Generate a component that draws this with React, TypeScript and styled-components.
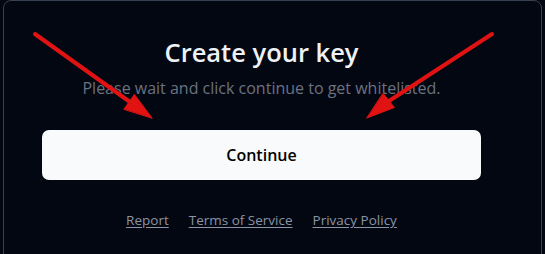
import styled, { createGlobalStyle } from "styled-components";

const GlobalStyle = createGlobalStyle`
  html, body {
    margin: 0;
    padding: 0;
    background: #030712;
    font-family: "Open Sans", "Noto Sans", sans-serif;
  }
`;

const Page = styled.div`
  position: relative;
  width: 545px;
  height: 254px;
  overflow: hidden;
  padding: 0 3px;
  box-sizing: border-box;
`;

const Card = styled.div`
  height: 280px;
  border: 1px solid #374151;
  border-radius: 8px;
  background: #030712;
  display: flex;
  flex-direction: column;
  align-items: center;
  padding: 33px 60px 0 38px;
  box-sizing: border-box;
`;

const Title = styled.h1`
  margin: 0;
  font-size: 25.5px;
  line-height: 36px;
  font-weight: 600;
  color: #eef2f7;
`;

const Subtitle = styled.p`
  margin: 7px 0 0;
  font-size: 16px;
  line-height: 22px;
  color: #6b7280;
`;

const ContinueButton = styled.button`
  margin-top: 31px;
  width: 100%;
  height: 50px;
  border: none;
  border-radius: 7px;
  background: #f8fafc;
  color: #000;
  font-family: inherit;
  font-size: 16px;
  font-weight: 600;
  cursor: pointer;
`;

const Links = styled.div`
  margin-top: 31px;
  display: flex;
  gap: 20px;
`;

const FooterLink = styled.a`
  font-size: 13.5px;
  color: #8b94a6;
  text-decoration: underline;
  text-underline-offset: 2px;
  cursor: pointer;
`;

const Arrows = styled.svg`
  position: absolute;
  left: 0;
  top: 0;
  pointer-events: none;
`;

const App = () => {
  return (
    <>
      <GlobalStyle />
      <Page>
        <Card>
          <Title>Create your key</Title>
          <Subtitle>Please wait and click continue to get whitelisted.</Subtitle>
          <ContinueButton>Continue</ContinueButton>
          <Links>
            <FooterLink>Report</FooterLink>
            <FooterLink>Terms of Service</FooterLink>
            <FooterLink>Privacy Policy</FooterLink>
          </Links>
        </Card>
        <Arrows width="545" height="254" viewBox="0 0 545 254">
          <g stroke="#e11212" strokeWidth="4" strokeLinecap="round" fill="#e11212">
            <line x1="35" y1="34" x2="130" y2="102" />
            <polygon points="124,109 134.4,94.4 152,118" strokeWidth="1" />
            <line x1="492" y1="34" x2="389" y2="101" />
            <polygon points="383.2,93.5 394.4,107.5 367,118" strokeWidth="1" />
          </g>
        </Arrows>
      </Page>
    </>
  );
};

export default App;
